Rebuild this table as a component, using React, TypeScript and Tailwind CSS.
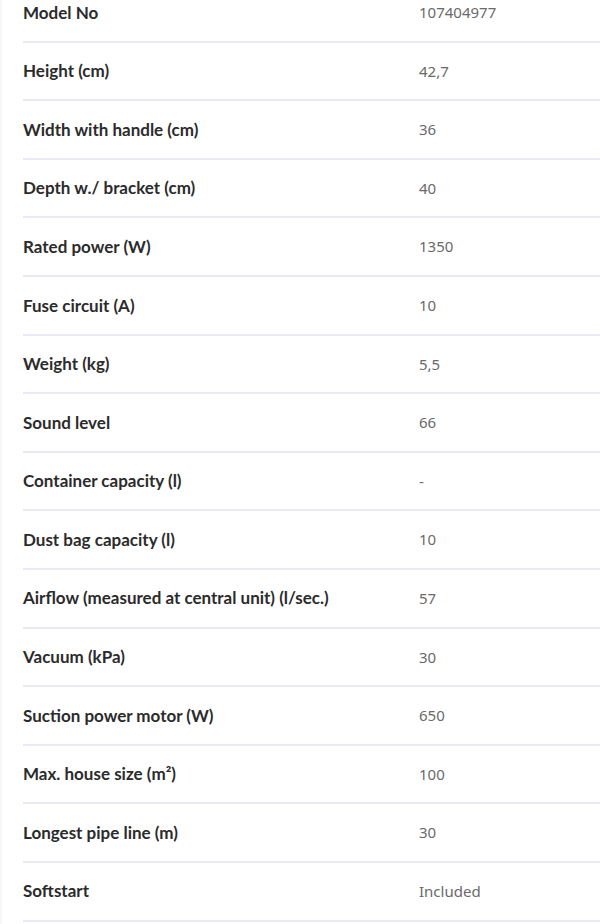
const specs: [string, React.ReactNode][] = [
  ["Model No", "107404977"],
  ["Height (cm)", "42,7"],
  ["Width with handle (cm)", "36"],
  ["Depth w./ bracket (cm)", "40"],
  ["Rated power (W)", "1350"],
  ["Fuse circuit (A)", "10"],
  ["Weight (kg)", "5,5"],
  ["Sound level", "66"],
  ["Container capacity (l)", "-"],
  ["Dust bag capacity (l)", "10"],
  ["Airflow (measured at central unit) (l/sec.)", "57"],
  ["Vacuum (kPa)", "30"],
  ["Suction power motor (W)", "650"],
  ["Max. house size (m²)", "100"],
  ["Longest pipe line (m)", "30"],
  ["Softstart", "Included"],
];

function SpecRow({ label, value }: { label: string; value: React.ReactNode }) {
  return (
    <div className="flex items-center h-[58.6px] border-b-2 border-[#e9eaf3]">
      <div className="w-[396px] shrink-0 text-[17px] font-bold text-[#2b2b2b] font-['Lato',sans-serif]">
        {label}
      </div>
      <div className="text-[15px] text-[#6a6a6a] font-['Noto_Sans',sans-serif]">{value}</div>
    </div>
  );
}

export default function App() {
  return (
    <div className="w-[600px] h-[924px] overflow-hidden bg-white border-l-2 border-[#f6f6f8]">
      <div className="-mt-[16px] ml-[21px]">
        {specs.map(([label, value]) => (
          <SpecRow key={label} label={label} value={value} />
        ))}
      </div>
    </div>
  );
}
